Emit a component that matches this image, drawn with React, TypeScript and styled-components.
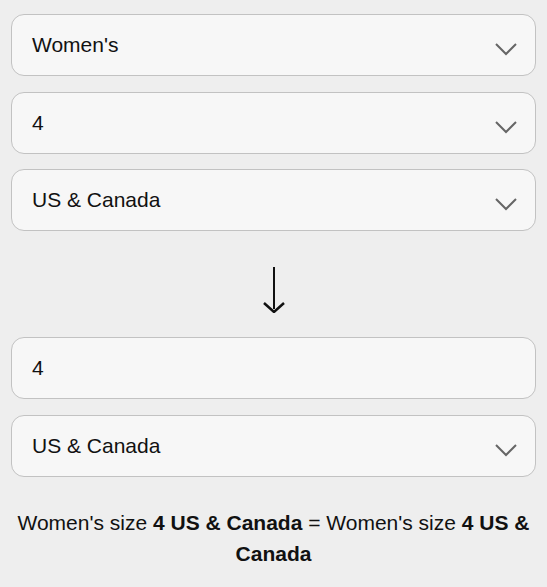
import styled, { createGlobalStyle } from 'styled-components';

const GlobalStyle = createGlobalStyle`
    html, body {
        margin: 0;
        padding: 0;
        background-color: #eeeeee;
        font-family: 'Liberation Sans', Arial, sans-serif;
    }
`;

const Page = styled.div`
    padding: 14px 11px 0;
    display: flex;
    flex-direction: column;
`;

const Group = styled.div`
    display: flex;
    flex-direction: column;
    gap: 15.5px;
`;

const Field = styled.div`
    height: 62px;
    box-sizing: border-box;
    border: 1px solid #c2c2c2;
    border-radius: 13px;
    background-color: #f7f7f7;
    display: flex;
    align-items: center;
    justify-content: space-between;
    padding: 0 18px 0 20px;
    font-size: 21px;
    color: #111;
`;

const Chevron = styled.svg`
    width: 22px;
    height: 14px;
    margin-top: 8px;
`;

const ArrowRow = styled.div`
    display: flex;
    justify-content: center;
    padding: 36px 0 24px;
`;

const Result = styled.p`
    margin: 30px 0 0;
    text-align: center;
    font-size: 21px;
    line-height: 31px;
    color: #111;
    b {
        font-weight: 700;
    }
`;

function Select({ value }: { value: string }) {
    return (
        <Field>
            <span>{value}</span>
            <Chevron viewBox="0 0 22 14">
                <path d="M1 2 L11 12 L21 2" fill="none" stroke="#666" strokeWidth="2" />
            </Chevron>
        </Field>
    );
}

function App() {
    return (
        <>
            <GlobalStyle />
            <Page>
                <Group>
                    <Select value="Women's" />
                    <Select value="4" />
                    <Select value="US & Canada" />
                </Group>
                <ArrowRow>
                    <svg width="22" height="46" viewBox="0 0 22 46">
                        <line x1="11" y1="0" x2="11" y2="42" stroke="#111" strokeWidth="2" />
                        <path d="M1 36 L11 45 L21 36" fill="none" stroke="#111" strokeWidth="2.5" />
                    </svg>
                </ArrowRow>
                <Group>
                    <Field>
                        <span>4</span>
                    </Field>
                    <Select value="US & Canada" />
                </Group>
                <Result>
                    Women's size <b>4 US &amp; Canada</b> = Women's size <b>4 US &amp; Canada</b>
                </Result>
            </Page>
        </>
    );
}

export default App;
